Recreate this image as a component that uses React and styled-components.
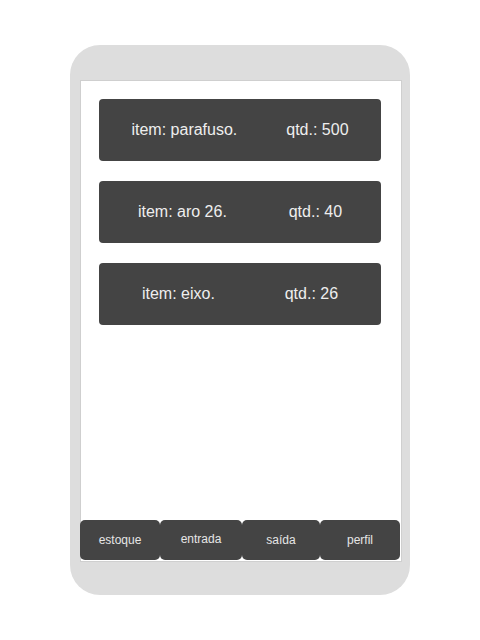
import React from "react";
import styled, { createGlobalStyle } from "styled-components";

const Global = createGlobalStyle`
  html, body { margin: 0; padding: 0; background: #ffffff; }
  body { font-family: "Liberation Sans", Arial, sans-serif; }
`;

const Phone = styled.div`
  box-sizing: border-box;
  width: 340px;
  height: 550px;
  margin: 45px auto 0;
  padding: 35px 10px 0;
  background: #dddddd;
  border-radius: 30px;
`;

const Screen = styled.div`
  box-sizing: border-box;
  width: 322px;
  height: 482px;
  background: #ffffff;
  border: 1px solid #cfcfcf;
  display: flex;
  flex-direction: column;
`;

const List = styled.div`
  display: flex;
  flex-direction: column;
  gap: 20px;
  padding: 18px 20px 0 18px;
`;

const Card = styled.div`
  box-sizing: border-box;
  height: 62px;
  background: #444444;
  border-radius: 4px;
  display: flex;
  align-items: center;
  justify-content: space-around;
  padding: 0 8px;
  color: #eeeeee;
  font-size: 16px;
`;

const Nav = styled.div`
  margin-top: auto;
  margin-left: -1px;
  margin-bottom: 1px;
  width: 320px;
  height: 40px;
  display: flex;
`;

const NavButton = styled.div`
  box-sizing: border-box;
  width: ${(p) => p.$w}px;
  height: 40px;
  background: #444444;
  border-radius: 5px;
  color: #e6e6e6;
  font-size: 12px;
  display: flex;
  align-items: center;
  justify-content: center;
  padding-bottom: ${(p) => (p.$raised ? 2 : 0)}px;
`;

const items = [
  { name: "parafuso", qtd: 500 },
  { name: "aro 26", qtd: 40 },
  { name: "eixo", qtd: 26 },
];

const tabs = [
  { label: "estoque", w: 80 },
  { label: "entrada", w: 82, raised: true },
  { label: "saída", w: 78 },
  { label: "perfil", w: 80 },
];

export default function App() {
  return (
    <>
      <Global />
      <Phone>
        <Screen>
          <List>
            {items.map((it) => (
              <Card key={it.name}>
                <span>item: {it.name}.</span>
                <span>qtd.: {it.qtd}</span>
              </Card>
            ))}
          </List>
          <Nav>
            {tabs.map((t) => (
              <NavButton key={t.label} $w={t.w} $raised={t.raised}>
                {t.label}
              </NavButton>
            ))}
          </Nav>
        </Screen>
      </Phone>
    </>
  );
}
